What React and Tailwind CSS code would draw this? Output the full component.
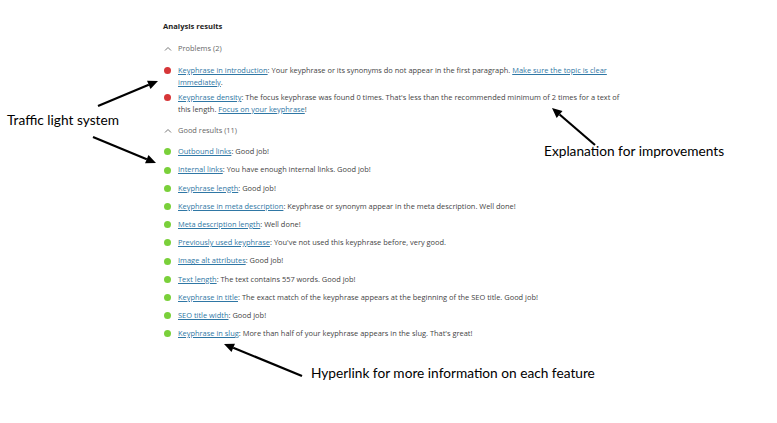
import React from 'react'

const problems = [
  {
    link: 'Keyphrase in introduction',
    lines: [
      <>: Your keyphrase or its synonyms do not appear in the first paragraph. <a className="text-[#2f77a5] underline">Make sure the topic is clear</a></>,
      <><a className="text-[#2f77a5] underline">immediately</a>.</>,
    ],
  },
  {
    link: 'Keyphrase density',
    lines: [
      <>: The focus keyphrase was found 0 times. That's less than the recommended minimum of 2 times for a text of</>,
      <>this length. <a className="text-[#2f77a5] underline">Focus on your keyphrase</a>!</>,
    ],
  },
]

const good = [
  ['Outbound links', 'Good job!'],
  ['Internal links', 'You have enough internal links. Good job!'],
  ['Keyphrase length', 'Good job!'],
  ['Keyphrase in meta description', 'Keyphrase or synonym appear in the meta description. Well done!'],
  ['Meta description length', 'Well done!'],
  ['Previously used keyphrase', "You've not used this keyphrase before, very good."],
  ['Image alt attributes', 'Good job!'],
  ['Text length', 'The text contains 557 words. Good job!'],
  ['Keyphrase in title', 'The exact match of the keyphrase appears at the beginning of the SEO title. Good job!'],
  ['SEO title width', 'Good job!'],
  ['Keyphrase in slug', "More than half of your keyphrase appears in the slug. That's great!"],
]

function Chevron() {
  return (
    <svg width="15" height="12" viewBox="0 0 15 12" className="shrink-0">
      <polyline points="2,7.5 5,4.5 8,7.5" fill="none" stroke="#777" strokeWidth="1" />
    </svg>
  )
}

function GroupTitle({ children }) {
  return (
    <div className="flex items-center h-[12px] text-[#666]">
      <Chevron />
      <span>{children}</span>
    </div>
  )
}

function Dot({ color }) {
  return (
    <span className="w-[15px] h-[11.7px] flex items-center shrink-0">
      <span className={`w-[7px] h-[7px] rounded-full ml-[0.5px] ${color}`} />
    </span>
  )
}

function Item({ color, children }) {
  return (
    <li className="flex leading-[11.7px]">
      <Dot color={color} />
      <div className="text-[#444]">{children}</div>
    </li>
  )
}

function Arrow({ x1, y1, x2, y2 }) {
  const a = Math.atan2(y2 - y1, x2 - x1)
  const len = 10
  const w = 4.5
  const bx = x2 - len * Math.cos(a)
  const by = y2 - len * Math.sin(a)
  const px = -Math.sin(a) * w
  const py = Math.cos(a) * w
  return (
    <g>
      <line x1={x1} y1={y1} x2={bx} y2={by} stroke="#000" strokeWidth="2.2" />
      <polygon points={`${x2},${y2} ${bx + px},${by + py} ${bx - px},${by - py}`} fill="#000" />
    </g>
  )
}

export default function App() {
  return (
    <div className="relative w-[777px] h-[423px] overflow-hidden bg-white" style={{ fontFamily: '"Open Sans", sans-serif' }}>
      <div className="pl-[163px] pt-[20px] text-[7.45px]">
        <h2 className="font-bold text-[#1e1e1e] leading-[12px] text-[7.6px]">Analysis results</h2>

        <div className="mt-[11px]">
          <GroupTitle>Problems (2)</GroupTitle>
          <ul className="mt-[10px] flex flex-col gap-[3.6px]">
            {problems.map((p) => (
              <Item key={p.link} color="bg-[#d63638]">
                <a className="text-[#2f77a5] underline">{p.link}</a>
                {p.lines[0]}
                <br />
                {p.lines[1]}
              </Item>
            ))}
          </ul>
        </div>

        <div className="mt-[9.5px]">
          <GroupTitle>Good results (11)</GroupTitle>
          <ul className="mt-[9.2px] flex flex-col gap-[6.5px]">
            {good.map(([link, text]) => (
              <Item key={link} color="bg-[#7ad03a]">
                <a className="text-[#2f77a5] underline">{link}</a>: {text}
              </Item>
            ))}
          </ul>
        </div>
      </div>

      {/* annotations */}
      <div style={{ fontFamily: 'Lato, sans-serif' }} className="text-black text-[13.7px] leading-[16px]">
        <span className="absolute left-[7px] top-[112px]">Traffic light system</span>
        <span className="absolute left-[544px] top-[143px]">Explanation for improvements</span>
        <span className="absolute left-[311px] top-[365px]">Hyperlink for more information on each feature</span>
      </div>
      <svg className="absolute inset-0" width="777" height="423">
        <Arrow x1={98} y1={106} x2={158} y2={81} />
        <Arrow x1={93} y1={137} x2={156} y2={163} />
        <Arrow x1={595} y1={145} x2={552} y2={108} />
        <Arrow x1={302} y1={376} x2={224} y2={344} />
      </svg>
    </div>
  )
}
